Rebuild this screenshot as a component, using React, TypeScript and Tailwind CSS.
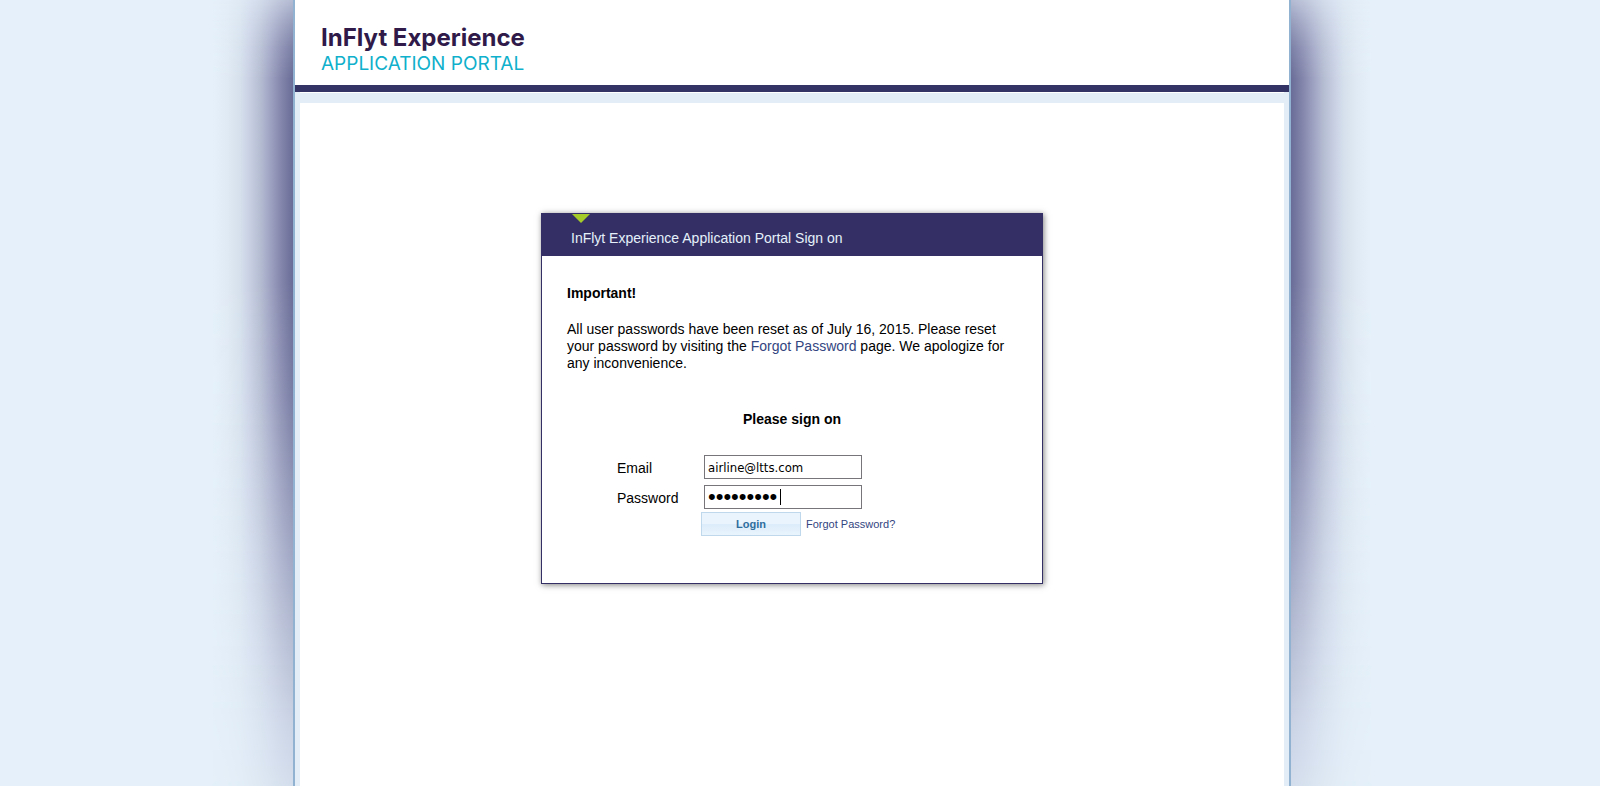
import React from "react";

function SideShadow({ side }: { side: "left" | "right" }) {
  const fade =
    "w-20 shrink-0 [mask-image:linear-gradient(to_bottom,rgba(0,0,0,0.4),rgba(0,0,0,0.65)_3%,rgba(0,0,0,0.85)_6%,black_10%,black_36%,rgba(0,0,0,0.88)_50%,rgba(0,0,0,0.66)_64%,rgba(0,0,0,0.44)_78%,rgba(0,0,0,0.22)_92%,rgba(0,0,0,0.14))]";
  const left =
    "bg-[linear-gradient(to_left,#696c97,#8688ad_16%,#a0a4c3_29%,#b5bdd2_41%,#c8cfe3_54%,#d5e0ec_66%,#e0eaf4_82%,#e5f0fa)]";
  const right =
    "bg-[linear-gradient(to_right,#696c97,#8688ad_16%,#a0a4c3_29%,#b5bdd2_41%,#c8cfe3_54%,#d5e0ec_66%,#e0eaf4_82%,#e5f0fa)]";
  return (
    <div
      aria-hidden="true"
      className={
        side === "left"
          ? "flex min-w-0 flex-1 justify-end overflow-hidden"
          : "flex min-w-0 flex-1 justify-start overflow-hidden"
      }
    >
      <div className={`${fade} ${side === "left" ? left : right}`} />
    </div>
  );
}

function Header() {
  return (
    <header className="border-b-7 border-[#333366] bg-white pt-6 pl-[26px] font-['Inter',sans-serif]">
      <div className="h-[61px]">
        <div className="text-[24px] leading-7 font-bold text-[#2f1a4a]">InFlyt Experience</div>
        <div className="text-[19px] leading-6 text-[#0fb0cb]">APPLICATION PORTAL</div>
      </div>
    </header>
  );
}

function SignOnCard() {
  const field = "h-6 w-[158px] border border-[#77757a] bg-white px-[3px] text-black outline-none";
  return (
    <section className="w-full max-w-[502px] border border-[#343066] bg-white shadow-[1px_1px_6px_rgba(0,0,0,0.5)]">
      <div className="h-[42px] bg-[#343066] pl-[29px]">
        <svg width="20" height="10" viewBox="0 0 20 10" className="block" aria-hidden="true">
          <path d="M1 0h18L10 9z" fill="#a5cb28" />
        </svg>
        <h1 className="pt-[6px] leading-[17px] text-[#e5f0fa]">InFlyt Experience Application Portal Sign on</h1>
      </div>
      <div className="px-[25px] pt-[29px] pb-[47px]">
        <h2 className="font-bold">Important!</h2>
        <p className="mt-[19px]">
          All user passwords have been reset as of July 16, 2015. Please reset your password by visiting the{" "}
          <a href="#forgot" className="text-[#33457f]">Forgot Password</a> page. We apologize for any inconvenience.
        </p>
        <h2 className="mt-[39px] text-center font-bold">Please sign on</h2>
        <form className="mt-[27px] pl-[50px]" onSubmit={(e) => e.preventDefault()}>
          <div className="flex flex-col gap-[6px]">
            <div className="flex items-center">
              <label htmlFor="email" className="w-[87px] pt-[3px]">Email</label>
              <input
                id="email"
                type="email"
                defaultValue="airline@ltts.com"
                className={`${field} font-['DejaVu_Sans_Condensed','DejaVu_Sans',sans-serif] text-[13px]`}
              />
            </div>
            <div className="flex items-center">
              <label htmlFor="password" className="w-[87px] pt-[3px]">Password</label>
              <div className="relative flex">
                <input
                  id="password"
                  type="password"
                  defaultValue="airline15"
                  className={`${field} text-[22px]`}
                />
                <span aria-hidden="true" className="absolute top-1 left-[76px] h-4 w-px bg-black" />
              </div>
            </div>
          </div>
          <div className="mt-[3px] flex items-center gap-[5px] pl-[84px] text-[11px]">
            <button
              type="submit"
              className="h-6 w-[100px] border border-[#c0d8ec] bg-[linear-gradient(to_bottom,#e9f4fd_50%,#dcecfa_50%,#e9f4fd)] font-bold text-[#2e6e9e]"
            >
              Login
            </button>
            <a href="#forgot" className="text-[#33457f]">Forgot Password?</a>
          </div>
        </form>
      </div>
    </section>
  );
}

export default function App() {
  return (
    <div className="flex min-h-screen bg-[#e5f0fa] pr-4 font-['Liberation_Sans',Arial,sans-serif] text-[14px] leading-[17px] text-black">
      <SideShadow side="left" />
      <div className="flex w-full max-w-[998px] flex-col border-x-2 border-[#92b2d2] bg-[#e3edf8]">
        <Header />
        <main className="mx-[5px] flex flex-1 flex-col items-center border-t border-white">
          <div className="flex w-full flex-1 flex-col items-center border-t-10 border-[#e3edf8] bg-white pt-[110px]">
            <SignOnCard />
          </div>
        </main>
      </div>
      <SideShadow side="right" />
    </div>
  );
}
